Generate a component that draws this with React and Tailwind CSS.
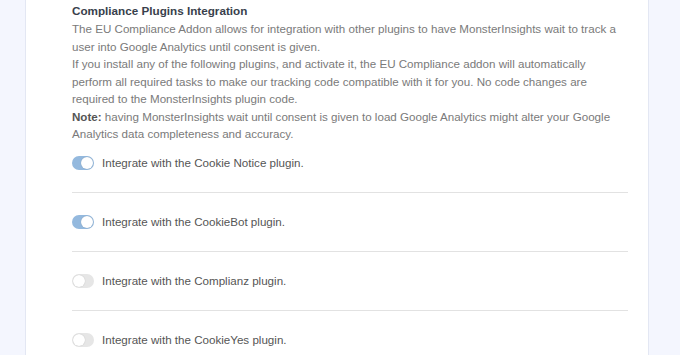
import React, { useState } from 'react';

const PLUGINS = [
  { id: 'cookie-notice', label: 'Integrate with the Cookie Notice plugin.', on: true },
  { id: 'cookiebot', label: 'Integrate with the CookieBot plugin.', on: true },
  { id: 'complianz', label: 'Integrate with the Complianz plugin.', on: false },
  { id: 'cookieyes', label: 'Integrate with the CookieYes plugin.', on: false },
];

function Toggle({ checked, onChange }) {
  return (
    <button
      type="button"
      role="switch"
      aria-checked={checked}
      onClick={onChange}
      className={`w-[22px] h-[14px] rounded-full shrink-0 flex items-center px-px ${
        checked ? 'bg-[#94b9de] justify-end' : 'bg-[#e6e6e6] justify-start'
      }`}
    >
      <span className="w-[12px] h-[12px] rounded-full bg-white shadow-[0_0_1px_rgba(0,0,0,0.25)]" />
    </button>
  );
}

export default function App() {
  const [state, setState] = useState(() => Object.fromEntries(PLUGINS.map((p) => [p.id, p.on])));

  return (
    <div className="h-[355px] w-[680px] overflow-hidden bg-[#f4f6fe] flex font-['Liberation_Sans',Arial,sans-serif]">
      <div className="ml-[25px] w-[624px] h-full bg-white border-x border-[#e3e7f3] pl-[46px] pr-[20px] pt-[2px]">
        <h3 className="text-[11.7px] leading-[18px] font-bold text-[#393f4c]">Compliance Plugins Integration</h3>
        <div className="text-[11.6px] leading-[17.5px] text-[#7a7a7a]">
          <p>
            The EU Compliance Addon allows for integration with other plugins to have MonsterInsights wait to track a
            user into Google Analytics until consent is given.
          </p>
          <p>
            If you install any of the following plugins, and activate it, the EU Compliance addon will automatically
            perform all required tasks to make our tracking code compatible with it for you. No code changes are
            required to the MonsterInsights plugin code.
          </p>
          <p>
            <strong className="text-[#555]">Note:</strong> having MonsterInsights wait until consent is given to load
            Google Analytics might alter your Google
            <br />
            Analytics data completeness and accuracy.
          </p>
        </div>

        <div className="flex flex-col">
          {PLUGINS.map((p, i) => (
            <div
              key={p.id}
              className={`flex items-center gap-[8px] pb-[22px] ${i === 0 ? 'pt-[13px]' : 'pt-[22px]'} ${
                i < PLUGINS.length - 1 ? 'border-b border-[#e2e2e2]' : ''
              }`}
            >
              <Toggle
                checked={state[p.id]}
                onChange={() => setState((s) => ({ ...s, [p.id]: !s[p.id] }))}
              />
              <span className="text-[11.6px] leading-[14px] text-[#555]">{p.label}</span>
            </div>
          ))}
        </div>
      </div>
    </div>
  );
}
